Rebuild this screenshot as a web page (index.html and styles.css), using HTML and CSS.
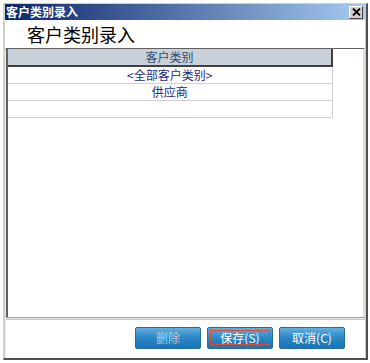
FILE: index.html
```html
<!DOCTYPE html>
<html lang="zh-CN">
<head>
    <meta charset="UTF-8">
    <title>客户类别录入</title>
    <link rel="stylesheet" href="styles.css">
</head>
<body>
    <div class="window">
        <div class="titlebar">
            <span class="title">客户类别录入</span>
            <span class="close-btn">
                <svg width="9" height="8" viewBox="0 0 9 8"><path d="M1 0.5 L8 7.5 M8 0.5 L1 7.5" stroke="#000" stroke-width="1.8"/></svg>
            </span>
        </div>
        <div class="body">
            <h1 class="heading">客户类别录入</h1>
            <div class="grid-panel">
                <table class="grid">
                    <tr><th>客户类别</th></tr>
                    <tr><td>&lt;全部客户类别&gt;</td></tr>
                    <tr><td>供应商</td></tr>
                    <tr><td></td></tr>
                </table>
            </div>
            <div class="footer">
                <button class="btn btn-disabled">删除</button>
                <button class="btn btn-focus">保存(S)</button>
                <button class="btn">取消(C)</button>
            </div>
        </div>
    </div>
</body>
</html>
```

FILE: styles.css
```css
body {
    margin: 0;
    background: #ffffff;
    font-family: "Noto Sans CJK SC", "Liberation Sans", sans-serif;
    font-size: 12px;
}
.window {
    margin: 3px 0 0 3px;
    width: 362px;
    height: 354px;
    border-left: 1px solid #d4d0c8;
    border-top: 1px solid #d4d0c8;
    border-right: 2px solid #505050;
    border-bottom: 2px solid #505050;
    background: #d4d0c8;
    display: flex;
    flex-direction: column;
}
.titlebar {
    height: 16px;
    margin: 0 1px 0 1px;
    background: linear-gradient(to right, #0a246a, #a6caf0);
    display: flex;
    align-items: center;
    justify-content: space-between;
}
.title {
    color: #ffffff;
    font-weight: bold;
    font-size: 12px;
    line-height: 16px;
    padding-left: 1px;
}
.close-btn {
    width: 12px;
    height: 11px;
    margin-right: 2px;
    background: #d4d0c8;
    border-top: 1px solid #ffffff;
    border-left: 1px solid #ffffff;
    border-right: 1px solid #404040;
    border-bottom: 1px solid #404040;
    display: flex;
    align-items: center;
    justify-content: center;
}
.body {
    flex: 1;
    background: #ffffff;
    margin: 0 1px 0 1px;
    display: flex;
    flex-direction: column;
}
.heading {
    margin: 0;
    padding-left: 22px;
    height: 28px;
    font-size: 18px;
    font-weight: normal;
    line-height: 28px;
    color: #000000;
}
.grid-panel {
    height: 268px;
    border-left: 1px solid #e8e8e4;
    border-right: 2px solid #e0ddd6;
    border-top: 1px solid #606060;
    box-shadow: inset 2px 0 0 #606060;
    padding-left: 2px;
}
.grid {
    border-collapse: collapse;
    width: 325px;
}
.grid th {
    height: 16px;
    padding: 0;
    background: #c8d0da;
    color: #2e4e6e;
    font-weight: normal;
    font-size: 12px;
    line-height: 16px;
    border-right: 2px solid #404040;
    border-bottom: 2px solid #404040;
}
.grid td {
    height: 16px;
    padding: 0;
    text-align: center;
    color: #1c2c84;
    font-size: 12px;
    line-height: 16px;
    border-right: 1px solid #d0d0d0;
    border-bottom: 1px solid #d0d0d0;
}
.footer {
    flex: 1;
    border-top: 1px solid #a0a0a0;
    box-shadow: inset 0 1px 0 #e8e8e4, inset 0 2px 0 #c8c8c8;
    border-left: 1px solid #e8e8e4;
    display: flex;
    justify-content: flex-end;
    align-items: center;
    gap: 6px;
    padding-right: 20px;
}
.btn {
    position: relative;
    width: 66px;
    height: 22px;
    padding: 0;
    border: 1px solid #2a6a9c;
    border-radius: 2px;
    background: linear-gradient(to bottom, #62aee0, #2a86c6 50%, #1c74b4);
    color: #ffffff;
    font-family: "Noto Sans CJK SC", "Liberation Sans", sans-serif;
    font-size: 12px;
    line-height: 20px;
}
.btn-disabled {
    color: #b8cce0;
}
.btn-focus::after {
    content: "";
    position: absolute;
    left: 2px;
    top: 2px;
    right: 2px;
    bottom: 3px;
    border: 1px solid #e04a30;
}
```
